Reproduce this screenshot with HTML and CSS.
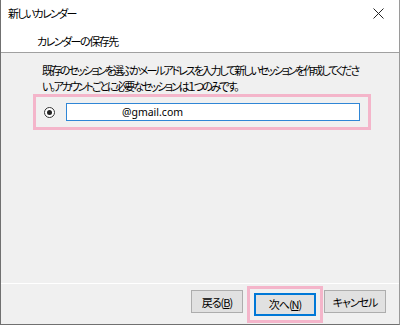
FILE: index.html
```html
<!DOCTYPE html>
<html lang="ja">
<head>
    <meta charset="UTF-8">
    <title>新しいカレンダー</title>
    <link rel="stylesheet" href="styles.css">
</head>
<body>
    <div class="window">
        <div class="header">
            <div class="titlebar">
                <span class="title">新しいカレンダー</span>
                <svg class="close" width="11" height="11" viewBox="0 0 11 11">
                    <path d="M0.5 0.5 L10.5 10.5 M10.5 0.5 L0.5 10.5" stroke="#222" stroke-width="1" fill="none"/>
                </svg>
            </div>
            <div class="subtitle">カレンダーの保存先</div>
        </div>

        <div class="content">
            <p class="desc">既存のセッションを選ぶかメールアドレスを入力して新しいセッションを作成してくださ<br>い。アカウントごとに必要なセッションは１つのみです。</p>
            <div class="mark choice">
                <span class="radio"><span class="dot"></span></span>
                <input type="text" class="email" value="@gmail.com">
            </div>
        </div>

        <div class="footer">
            <button class="btn btn-back">戻る(<u>B</u>)</button>
            <div class="mark next-mark">
                <button class="btn btn-default">次へ(<u>N</u>)</button>
            </div>
            <button class="btn btn-cancel">キャンセル</button>
        </div>
    </div>
</body>
</html>
```

FILE: styles.css
```css
* {
    box-sizing: border-box;
}
body {
    margin: 0;
    padding: 0;
    background-color: #f0f0f0;
    font-family: "Noto Sans CJK JP", "Noto Sans", sans-serif;
    font-feature-settings: "palt";
    color: #000;
}
.window {
    width: 400px;
    height: 325px;
    border-left: 1px solid #707070;
    border-right: 1px solid #9a9a9a;
    border-bottom: 1px solid #707070;
    background-color: #f0f0f0;
    display: flex;
    flex-direction: column;
}
.header {
    background-color: #fff;
    height: 53px;
    border-bottom: 1px solid #a0a0a0;
}
.titlebar {
    height: 28px;
    display: flex;
    align-items: center;
    justify-content: space-between;
    padding: 0 15px 2px 7px;
}
.title {
    font-size: 11px;
    letter-spacing: -1.7px;
}
.close {
    display: block;
}
.subtitle {
    font-size: 11px;
    letter-spacing: -1.5px;
    padding-left: 36px;
    line-height: 26px;
}
.content {
    flex: 1;
    padding-top: 9px;
}
.desc {
    margin: 0 0 0 41px;
    font-size: 11px;
    line-height: 16px;
    letter-spacing: -2.1px;
    white-space: nowrap;
}
.mark {
    border: 3px solid #f4b5ca;
}
.choice {
    margin: 0 0 0 32px;
    width: 338px;
    height: 36px;
    display: flex;
    align-items: center;
    padding-left: 8px;
}
.radio {
    width: 11px;
    height: 11px;
    border: 1px solid #333;
    border-radius: 50%;
    display: flex;
    align-items: center;
    justify-content: center;
    margin-right: 11px;
    background-color: #fff;
}
.dot {
    width: 5px;
    height: 5px;
    border-radius: 50%;
    background-color: #222;
}
.email {
    width: 294px;
    height: 18px;
    border: 1px solid #2f86d6;
    background-color: #fff;
    font-family: "Noto Sans", sans-serif;
    font-size: 10.5px;
    padding: 0 0 0 55px;
    outline: none;
    color: #000;
}
.footer {
    height: 41px;
    border-top: 1px solid #fff;
    display: flex;
    justify-content: flex-end;
    align-items: flex-start;
    padding-right: 13px;
}
.btn {
    height: 23px;
    background-color: #e1e1e1;
    border: 1px solid #adadad;
    font-family: "Noto Sans CJK JP", sans-serif;
    font-feature-settings: "palt";
    font-size: 11px;
    letter-spacing: -1px;
    padding: 0;
    color: #000;
    margin-top: 6px;
}
.btn u {
    text-decoration: underline;
}
.btn-back {
    width: 52px;
    margin-right: 4px;
}
.next-mark {
    margin-top: 2px;
    padding: 1px 4px 4px 4px;
    margin-right: 1px;
}
.btn-default {
    width: 62px;
    margin-top: 0;
    border: 1px solid #0078d7;
    box-shadow: inset 0 0 0 1px #0078d7;
}
.btn-cancel {
    width: 62px;
}
```
